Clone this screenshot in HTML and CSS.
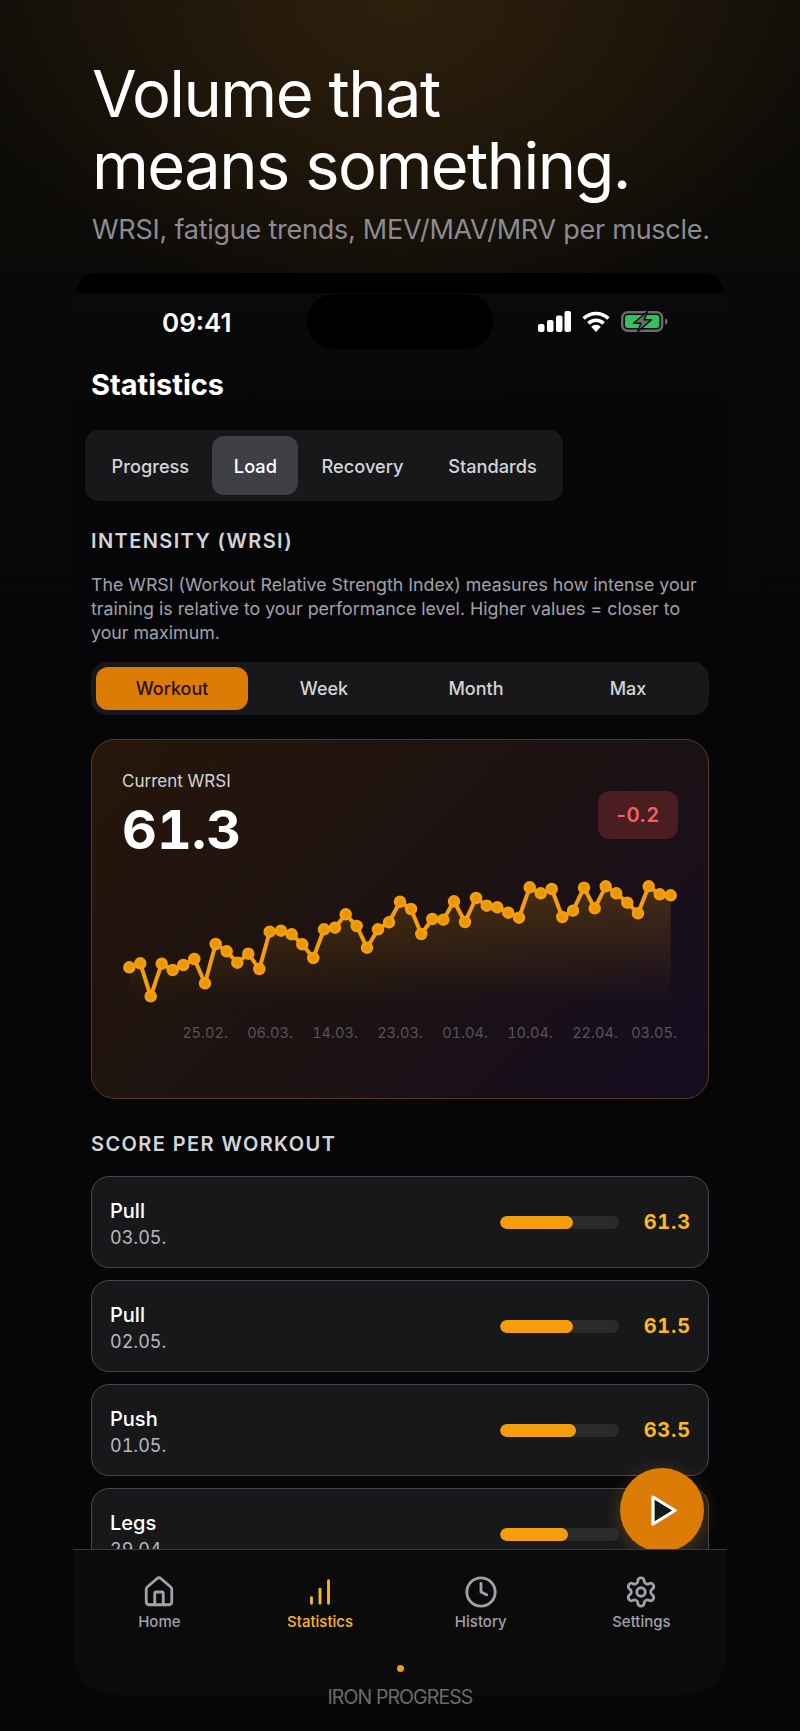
FILE: index.html
```html
<!DOCTYPE html>
<html lang="en">
<head>
<meta charset="utf-8">
<title>Iron Progress</title>
<link rel="stylesheet" href="styles.css">
</head>
<body>
<main class="stage">
  <header class="hero">
    <h1 class="hero-title">Volume that<br>means something.</h1>
    <p class="hero-sub">WRSI, fatigue trends, MEV/MAV/MRV per muscle.</p>
  </header>

  <section class="phone">
    <div class="bezel"></div>
    <div class="island"></div>
    <div class="statusbar">
      <span class="time">09:41</span>
      <div class="status-icons">
        <svg class="ic-signal" viewBox="0 0 33 21" width="33" height="21" fill="#fff">
          <rect x="0" y="13" width="6.5" height="8" rx="2"/>
          <rect x="9" y="9" width="6.5" height="12" rx="2"/>
          <rect x="18" y="4.5" width="6.5" height="16.5" rx="2"/>
          <rect x="26.5" y="0" width="6.5" height="21" rx="2"/>
        </svg>
        <svg class="ic-wifi" viewBox="0 0 28 21" width="28" height="21" fill="none" stroke="#fff" stroke-width="3.6">
          <path d="M1.6 7.6A17.5 17.5 0 0 1 26.4 7.6"/>
          <path d="M6.4 12.4A10.8 10.8 0 0 1 21.6 12.4"/>
          <path d="M14 21L9.2 15.8A6.8 6.8 0 0 1 18.8 15.8Z" fill="#fff" stroke="none"/>
        </svg>
        <svg class="ic-battery" viewBox="0 0 47 21" width="47" height="21">
          <rect x="1.2" y="1.2" width="40" height="18.6" rx="5.5" fill="none" stroke="#6b6b6b" stroke-width="2.4"/>
          <rect x="4" y="4" width="34.4" height="13" rx="3" fill="#30c25f"/>
          <path d="M44 7.5c2 .5 2.6 1.6 2.6 3s-.6 2.5-2.6 3z" fill="#6b6b6b"/>
          <path d="M26.5 .5L12.5 12.2H19.8L16.8 20.5L30.5 8.8H23.2Z" fill="#6b6b6b" stroke="#0a0a0c" stroke-width="1.4" stroke-linejoin="round"/>
        </svg>
      </div>
    </div>

    <div class="scroll">
      <h2 class="page-title">Statistics</h2>

      <nav class="tabs">
        <span class="tab">Progress</span>
        <span class="tab tab-active">Load</span>
        <span class="tab">Recovery</span>
        <span class="tab">Standards</span>
      </nav>

      <h3 class="section-title">INTENSITY (WRSI)</h3>
      <p class="desc">The WRSI (Workout Relative Strength Index) measures how intense your training is relative to your performance level. Higher values = closer to your maximum.</p>

      <div class="segments">
        <span class="seg seg-active">Workout</span>
        <span class="seg">Week</span>
        <span class="seg">Month</span>
        <span class="seg">Max</span>
      </div>

      <article class="card">
        <div class="card-head">
          <div>
            <div class="card-label">Current WRSI</div>
            <div class="card-value">61.3</div>
          </div>
          <div class="badge">-0.2</div>
        </div>
        <svg class="chart" viewBox="92 860 616 190" width="616" height="190">
          <defs>
            <linearGradient id="area" gradientUnits="userSpaceOnUse" x1="0" y1="886" x2="0" y2="1003">
              <stop offset="0" stop-color="#f59e0b" stop-opacity=".2"/>
              <stop offset="1" stop-color="#f59e0b" stop-opacity="0"/>
            </linearGradient>
          </defs>
          <path fill="url(#area)" d="M129.3 967.3L140.3 963.3L150.7 996.3L161.7 963.7L172.7 970L183.3 965L194.3 959L205 983.3L215.7 944L226.7 951.3L237.3 962.7L248.3 953.7L259.3 969L269.7 931.7L281 930.7L291.7 934.3L302.3 944.3L313.3 958L324 929.3L335 927.7L345.7 914.3L356.7 926L367 947.7L378 929.3L389 922.3L400 901.7L411 909L421.3 934L432.3 919L443.3 919.7L454 901.3L465 922L476 898L486.7 905.7L497.3 907.3L508.3 912.7L519 917.7L529.7 887.3L540.7 893.3L551.7 889L562.3 917L573 910.7L584 887.7L594.7 908.3L605.7 886.3L616.3 893.3L627.3 902.7L638 913.3L648.7 886.3L659.7 894.3L670.7 895.3V1003H129.3Z"/>
          <path fill="none" stroke="#f59e0b" stroke-width="4" stroke-linejoin="round" d="M129.3 967.3L140.3 963.3L150.7 996.3L161.7 963.7L172.7 970L183.3 965L194.3 959L205 983.3L215.7 944L226.7 951.3L237.3 962.7L248.3 953.7L259.3 969L269.7 931.7L281 930.7L291.7 934.3L302.3 944.3L313.3 958L324 929.3L335 927.7L345.7 914.3L356.7 926L367 947.7L378 929.3L389 922.3L400 901.7L411 909L421.3 934L432.3 919L443.3 919.7L454 901.3L465 922L476 898L486.7 905.7L497.3 907.3L508.3 912.7L519 917.7L529.7 887.3L540.7 893.3L551.7 889L562.3 917L573 910.7L584 887.7L594.7 908.3L605.7 886.3L616.3 893.3L627.3 902.7L638 913.3L648.7 886.3L659.7 894.3L670.7 895.3"/>
          <path fill="none" stroke="#f59e0b" stroke-width="12.5" stroke-linecap="round" d="M129.3 967.3h0M140.3 963.3h0M150.7 996.3h0M161.7 963.7h0M172.7 970h0M183.3 965h0M194.3 959h0M205 983.3h0M215.7 944h0M226.7 951.3h0M237.3 962.7h0M248.3 953.7h0M259.3 969h0M269.7 931.7h0M281 930.7h0M291.7 934.3h0M302.3 944.3h0M313.3 958h0M324 929.3h0M335 927.7h0M345.7 914.3h0M356.7 926h0M367 947.7h0M378 929.3h0M389 922.3h0M400 901.7h0M411 909h0M421.3 934h0M432.3 919h0M443.3 919.7h0M454 901.3h0M465 922h0M476 898h0M486.7 905.7h0M497.3 907.3h0M508.3 912.7h0M519 917.7h0M529.7 887.3h0M540.7 893.3h0M551.7 889h0M562.3 917h0M573 910.7h0M584 887.7h0M594.7 908.3h0M605.7 886.3h0M616.3 893.3h0M627.3 902.7h0M638 913.3h0M648.7 886.3h0M659.7 894.3h0M670.7 895.3h0"/>
          <path fill="none" stroke="#e89508" stroke-width="6.5" stroke-linecap="round" d="M129.3 967.3h0M140.3 963.3h0M150.7 996.3h0M161.7 963.7h0M172.7 970h0M183.3 965h0M194.3 959h0M205 983.3h0M215.7 944h0M226.7 951.3h0M237.3 962.7h0M248.3 953.7h0M259.3 969h0M269.7 931.7h0M281 930.7h0M291.7 934.3h0M302.3 944.3h0M313.3 958h0M324 929.3h0M335 927.7h0M345.7 914.3h0M356.7 926h0M367 947.7h0M378 929.3h0M389 922.3h0M400 901.7h0M411 909h0M421.3 934h0M432.3 919h0M443.3 919.7h0M454 901.3h0M465 922h0M476 898h0M486.7 905.7h0M497.3 907.3h0M508.3 912.7h0M519 917.7h0M529.7 887.3h0M540.7 893.3h0M551.7 889h0M562.3 917h0M573 910.7h0M584 887.7h0M594.7 908.3h0M605.7 886.3h0M616.3 893.3h0M627.3 902.7h0M638 913.3h0M648.7 886.3h0M659.7 894.3h0M670.7 895.3h0"/>
          <g class="axis" text-anchor="middle">
            <text x="205" y="1038">25.02.</text>
            <text x="270" y="1038">06.03.</text>
            <text x="335" y="1038">14.03.</text>
            <text x="400" y="1038">23.03.</text>
            <text x="465" y="1038">01.04.</text>
            <text x="530" y="1038">10.04.</text>
            <text x="595" y="1038">22.04.</text>
            <text x="654" y="1038">03.05.</text>
          </g>
        </svg>
      </article>

      <h3 class="section-title section-title-2">SCORE PER WORKOUT</h3>

      <div class="rows">
        <div class="row">
          <div class="row-main"><div class="row-name">Pull</div><div class="row-date">03.05.</div></div>
          <div class="track"><div class="fill" style="width:61.3%"></div></div>
          <div class="row-val">61.3</div>
        </div>
        <div class="row">
          <div class="row-main"><div class="row-name">Pull</div><div class="row-date">02.05.</div></div>
          <div class="track"><div class="fill" style="width:61.5%"></div></div>
          <div class="row-val">61.5</div>
        </div>
        <div class="row">
          <div class="row-main"><div class="row-name">Push</div><div class="row-date">01.05.</div></div>
          <div class="track"><div class="fill" style="width:63.5%"></div></div>
          <div class="row-val">63.5</div>
        </div>
        <div class="row">
          <div class="row-main"><div class="row-name">Legs</div><div class="row-date">29.04.</div></div>
          <div class="track"><div class="fill" style="width:57%"></div></div>
          <div class="row-val">57.0</div>
        </div>
      </div>
    </div>

    <button class="fab" aria-label="Start">
      <svg viewBox="0 0 26 31" width="26" height="31" fill="#18181b" stroke="#fff" stroke-width="3.2" stroke-linejoin="round"><path d="M2 2L24 15.5L2 29Z"/></svg>
    </button>

    <nav class="tabbar">
      <div class="tb-item">
        <svg class="tb-icon" viewBox="0 0 24 24"><path d="M15 21v-8a1 1 0 0 0-1-1h-4a1 1 0 0 0-1 1v8"/><path d="M3 10a2 2 0 0 1 .709-1.528l7-5.999a2 2 0 0 1 2.582 0l7 5.999A2 2 0 0 1 21 10v9a2 2 0 0 1-2 2H5a2 2 0 0 1-2-2z"/></svg>
        <span>Home</span>
      </div>
      <div class="tb-item tb-active">
        <svg class="tb-icon" viewBox="0 0 24 24"><path d="M12 20V10"/><path d="M18 20V4"/><path d="M6 20v-4"/></svg>
        <span>Statistics</span>
      </div>
      <div class="tb-item">
        <svg class="tb-icon" viewBox="0 0 24 24"><circle cx="12" cy="12" r="10"/><path d="M12 6v6l4 2"/></svg>
        <span>History</span>
      </div>
      <div class="tb-item">
        <svg class="tb-icon" viewBox="0 0 24 24"><path d="M12.22 2h-.44a2 2 0 0 0-2 2v.18a2 2 0 0 1-1 1.73l-.43.25a2 2 0 0 1-2 0l-.15-.08a2 2 0 0 0-2.73.73l-.22.38a2 2 0 0 0 .73 2.73l.15.1a2 2 0 0 1 1 1.72v.51a2 2 0 0 1-1 1.74l-.15.09a2 2 0 0 0-.73 2.73l.22.38a2 2 0 0 0 2.73.73l.15-.08a2 2 0 0 1 2 0l.43.25a2 2 0 0 1 1 1.73V20a2 2 0 0 0 2 2h.44a2 2 0 0 0 2-2v-.18a2 2 0 0 1 1-1.73l.43-.25a2 2 0 0 1 2 0l.15.08a2 2 0 0 0 2.73-.73l.22-.39a2 2 0 0 0-.73-2.73l-.15-.08a2 2 0 0 1-1-1.74v-.5a2 2 0 0 1 1-1.74l.15-.09a2 2 0 0 0 .73-2.73l-.22-.38a2 2 0 0 0-2.73-.73l-.15.08a2 2 0 0 1-2 0l-.43-.25a2 2 0 0 1-1-1.73V4a2 2 0 0 0-2-2z"/><circle cx="12" cy="12" r="3"/></svg>
        <span>Settings</span>
      </div>
    </nav>
  </section>

  <div class="brand">
    <span class="brand-dot"></span>
    <span class="brand-name">IRON PROGRESS</span>
  </div>
</main>
</body>
</html>
```

FILE: styles.css
```css
* { box-sizing: border-box; }
html, body { margin: 0; padding: 0; background: #060606; }
body { width: 800px; height: 1731px; overflow: hidden; font-family: Inter, "Liberation Sans", sans-serif; color: #fff; }

.stage {
  position: relative;
  width: 800px;
  height: 1731px;
  background:
    radial-gradient(ellipse 440px 340px at 400px 0, #2e1f0c 0%, rgba(46,31,12,.55) 50%, rgba(46,31,12,0) 100%),
    linear-gradient(#100e09 0, #0a0907 300px, #060606 700px, #060606 100%);
}

.hero { height: 273px; padding: 58px 0 0 92px; }
.hero-title { margin: 0; font-size: 65px; line-height: 72px; font-weight: 400; letter-spacing: -1.6px; }
.hero-sub { margin: 9px 0 0; font-size: 27px; line-height: 38px; font-weight: 400; letter-spacing: -.25px; color: #8b8b93; }

.phone {
  position: relative;
  margin: 0 73px;
  height: 1422px;
  display: flex;
  flex-direction: column;
  background: linear-gradient(transparent 20px, #0a0a0c 20px, #060608 150px, #060608 100%);
  border-radius: 0 0 42px 42px;
  overflow: hidden;
}
.bezel { height: 20px; flex: none; margin: 0 3px; background: #000; border-radius: 42px 42px 0 0; }
.island { position: absolute; left: 234px; top: 21px; width: 186px; height: 55px; border-radius: 28px; background: #000; }

.statusbar { height: 68px; flex: none; display: flex; justify-content: space-between; padding: 18px 59px 0 89px; }
.time { font-size: 26px; line-height: 32px; font-weight: 600; margin-top: -4px; }
.status-icons { display: flex; gap: 11px; align-items: flex-start; }

.scroll { flex: 1; min-height: 0; overflow: hidden; padding: 0 18px; }
.page-title { margin: 6px 0 0; font-size: 29px; line-height: 36px; font-weight: 700; }

.tabs { display: inline-flex; gap: 1.5px; margin: 27px 0 0 -6px; padding: 6px 5px; border-radius: 14px; background: #18181b; }
.tab { padding: 0 21.6px; height: 59px; display: flex; align-items: center; border-radius: 12px; font-size: 18.2px; font-weight: 500; color: #d4d4d8; }
.tab-active { background: #3f3f46; color: #fff; }

.section-title { margin: 27px 0 0; font-size: 20px; line-height: 26px; font-weight: 600; letter-spacing: 1.4px; color: #d4d4d8; }
.desc { margin: 19px 0 0; font-size: 17.8px; line-height: 24px; color: #a1a1aa; }

.segments { display: grid; grid-template-columns: repeat(4, 1fr); height: 53px; margin-top: 17px; padding: 5px; border-radius: 16px; background: #18181b; }
.seg { display: flex; align-items: center; justify-content: center; border-radius: 12px; font-size: 18px; font-weight: 500; color: #d4d4d8; }
.seg-active { background: #dc7c06; color: #2a1003; }

.card {
  height: 360px;
  margin-top: 24px;
  border: 1px solid #5a3a14;
  border-radius: 24px;
  background: linear-gradient(135deg, #26160a 0%, #1c1213 55%, #140c22 100%);
}
.card-head { height: 120px; display: flex; justify-content: space-between; padding: 30px 30px 0 30px; }
.card-label { font-size: 17px; line-height: 22px; color: #d4d4d8; }
.card-value { font-size: 54px; line-height: 60px; font-weight: 700; margin-top: 8px; font-variant-numeric: tabular-nums; }
.badge { width: 80px; height: 48px; margin-top: 21px; display: flex; align-items: center; justify-content: center; border-radius: 12px; background: #4a1d20; color: #f06262; font-size: 20px; font-weight: 600; letter-spacing: .5px; }
.chart { display: block; }
.axis { font-family: Inter, "Liberation Sans", sans-serif; font-size: 14.6px; fill: #56535c; font-variant-numeric: tabular-nums; }

.section-title-2 { margin-top: 32px; }
.rows { display: flex; flex-direction: column; gap: 12px; margin-top: 19px; }
.row { height: 92px; flex: none; display: flex; align-items: center; padding: 0 17px 0 18px; border: 1.5px solid #46464c; border-radius: 18px; background: #18181b; }
.row-main { flex: 1; padding-top: 4px; }
.row-name { font-size: 20px; line-height: 26px; font-weight: 500; }
.row-date { margin-top: 2px; font-size: 18px; line-height: 24px; color: #b9b9be; font-variant-numeric: tabular-nums; }
.track { width: 119px; height: 13px; border-radius: 7px; background: #2a2a2d; overflow: hidden; }
.fill { height: 100%; border-radius: 7px; background: #f59e0b; }
.row-val { width: 72px; text-align: right; font-size: 20px; font-weight: 700; letter-spacing: .8px; color: #fbb81c; font-variant-numeric: tabular-nums; }

.fab {
  position: absolute;
  z-index: 1;
  left: 547px;
  top: 1195px;
  width: 84px;
  height: 84px;
  padding: 0 0 0 4px;
  display: flex;
  align-items: center;
  justify-content: center;
  border: none;
  border-radius: 50%;
  background: #dc7c06;
  box-shadow: 0 4px 18px rgba(245,158,11,.25);
}

.tabbar {
  position: relative;
  z-index: 2;
  flex: none;
  height: 146px;
  display: grid;
  grid-template-columns: repeat(4, 160.7px);
  padding: 25px 6px 0;
  border-top: 1.5px solid #38383c;
  background: #0b0b0c;
}
.tb-item { display: flex; flex-direction: column; align-items: center; gap: 3px; font-size: 15px; line-height: 20px; font-weight: 500; color: #a1a1aa; }
.tb-icon { width: 34px; height: 34px; fill: none; stroke: #a1a1aa; stroke-width: 2; stroke-linecap: round; stroke-linejoin: round; }
.tb-active { color: #fbb81c; }
.tb-active .tb-icon { stroke: #fbb81c; }

.brand { position: absolute; left: 0; right: 0; top: 1665px; z-index: 3; display: flex; flex-direction: column; align-items: center; }
.brand-dot { width: 7px; height: 7px; border-radius: 50%; background: #f59e0b; }
.brand-name { margin-top: 12px; font-size: 19.5px; line-height: 26px; letter-spacing: -.9px; color: #6b6b70; }
```
